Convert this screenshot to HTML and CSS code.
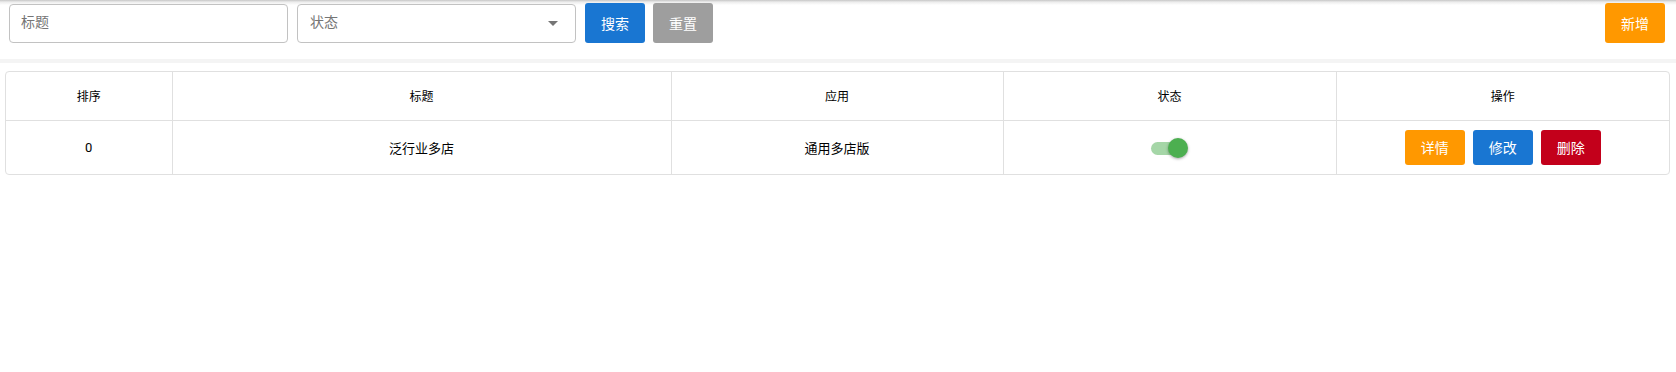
FILE: index.html
```html
<!DOCTYPE html>
<html lang="zh-CN">
<head>
    <meta charset="UTF-8">
    <title>模板列表</title>
    <link rel="stylesheet" href="styles.css">
</head>
<body>
    <div class="toolbar">
        <input type="text" class="field" placeholder="标题">
        <div class="select">
            <span class="select-text">状态</span>
            <i class="caret"></i>
        </div>
        <button class="btn btn-blue">搜索</button>
        <button class="btn btn-gray">重置</button>
        <div class="spacer"></div>
        <button class="btn btn-orange">新增</button>
    </div>
    <div class="divider"></div>

    <div class="table-wrap">
        <table>
            <thead>
                <tr>
                    <th class="col-sort">排序</th>
                    <th class="col-title">标题</th>
                    <th class="col-app">应用</th>
                    <th class="col-status">状态</th>
                    <th>操作</th>
                </tr>
            </thead>
            <tbody>
                <tr>
                    <td>0</td>
                    <td>泛行业多店</td>
                    <td>通用多店版</td>
                    <td>
                        <span class="switch on"><span class="thumb"></span></span>
                    </td>
                    <td>
                        <div class="actions">
                            <button class="btn btn-sm btn-orange">详情</button>
                            <button class="btn btn-sm btn-blue">修改</button>
                            <button class="btn btn-sm btn-red">删除</button>
                        </div>
                    </td>
                </tr>
            </tbody>
        </table>
    </div>
</body>
</html>
```

FILE: styles.css
```css
* {
    margin: 0;
    padding: 0;
    box-sizing: border-box;
}

body {
    background: #fff;
    font-family: Roboto, "Noto Sans CJK SC", sans-serif;
    color: #000;
}

.toolbar {
    display: flex;
    align-items: center;
    gap: 9px;
    height: 59px;
    padding: 3px 11px 16px 9px;
    background: linear-gradient(to bottom, #c6c6c6 0, #ececec 2px, #fff 5px);
}

.field,
.select {
    width: 279px;
    height: 39px;
    border: 1px solid #c2c2c2;
    border-radius: 4px;
    background: #fff;
    font-family: inherit;
    font-size: 14px;
}

.field {
    padding: 0 11px 2px;
    outline: none;
}

.field::placeholder {
    color: #757575;
}

.select {
    display: flex;
    align-items: center;
    justify-content: space-between;
    padding: 0 17px 0 12px;
    color: #757575;
}

.select-text {
    line-height: 1;
    margin-top: -3px;
}

.caret {
    width: 0;
    height: 0;
    border-left: 5px solid transparent;
    border-right: 5px solid transparent;
    border-top: 5px solid #757575;
}

.btn {
    width: 60px;
    height: 40px;
    border: none;
    border-radius: 3px;
    color: #fff;
    font-family: inherit;
    font-size: 14px;
    cursor: pointer;
}

.btn-gray {
    margin-left: -1px;
    background-color: #9e9e9e;
}

.btn-blue {
    background-color: #1976d2;
}

.btn-orange {
    background-color: #ff9800;
}

.btn-red {
    background-color: #c3001b;
}

.spacer {
    flex: 1;
}

.divider {
    height: 4px;
    background: #f4f4f4;
}

.table-wrap {
    margin: 8px 6px 0 5px;
    border: 1px solid #e0e0e0;
    border-radius: 4px;
    overflow: hidden;
}

table {
    width: 100%;
    border-collapse: collapse;
    table-layout: fixed;
}

th,
td {
    text-align: center;
    border-left: 1px solid #e0e0e0;
}

th:first-child,
td:first-child {
    border-left: none;
}

th {
    height: 48px;
    font-size: 12px;
    font-weight: normal;
    border-bottom: 1px solid #e0e0e0;
}

td {
    height: 54px;
    font-size: 13px;
}

.col-sort { width: 166px; }
.col-title { width: 499px; }
.col-app { width: 332px; }
.col-status { width: 333px; }

.switch {
    position: relative;
    display: inline-block;
    width: 34px;
    height: 13px;
    border-radius: 7px;
    background: #a5d6a7;
    vertical-align: middle;
    margin-left: -4px;
}

.switch .thumb {
    position: absolute;
    top: -4px;
    left: 17px;
    width: 20px;
    height: 20px;
    border-radius: 50%;
    background: #4caf50;
    box-shadow: 0 1px 3px rgba(0, 0, 0, 0.35);
}

.actions {
    display: flex;
    justify-content: center;
    gap: 8px;
}

.btn-sm {
    height: 35px;
}
```
